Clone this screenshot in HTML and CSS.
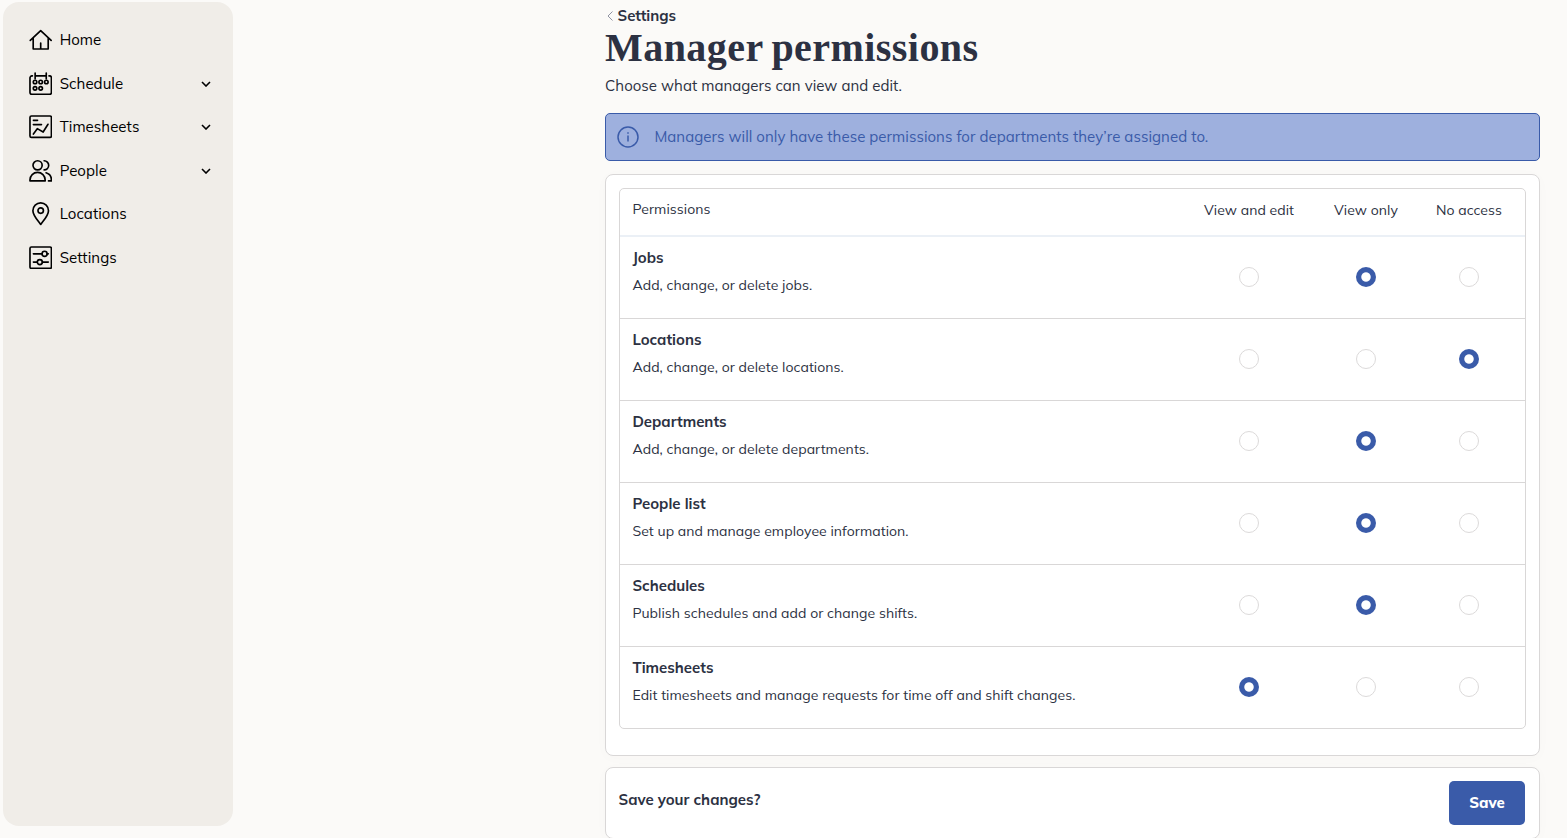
FILE: index.html
```html
<!DOCTYPE html>
<html lang="en">
<head>
    <meta charset="UTF-8">
    <title>Manager permissions</title>
    <link rel="stylesheet" href="styles.css">
</head>
<body>
    <!-- Sidebar menu -->
    <nav class="sidebar">
        <ul>
            <li><a href="#">
                <svg class="icon" viewBox="0 0 24 24"><path d="M1.3 12.7 12 2.6l10.7 10.1M4.3 10.5V21.5h15.4V10.5M12 21v-5.5"/></svg>
                <span>Home</span>
            </a></li>
            <li><a href="#">
                <svg class="icon" viewBox="0 0 24 24"><path d="M3.5 4H3a2 2 0 0 0-2 2v15a2 2 0 0 0 2 2h18a2 2 0 0 0 2-2V6a2 2 0 0 0-2-2h-.5M6.3 1v6M17.7 1v6M6.3 4h11.4"/><circle cx="6.2" cy="10.3" r="1.8"/><circle cx="12" cy="10.3" r="1.8"/><circle cx="17.8" cy="10.3" r="1.8"/><circle cx="6.2" cy="16.8" r="1.8"/><circle cx="12" cy="16.8" r="1.8"/></svg>
                <span>Schedule</span>
                <svg class="chevron" viewBox="0 0 10 6"><path d="M1 1l4 4 4-4"/></svg>
            </a></li>
            <li><a href="#">
                <svg class="icon" viewBox="0 0 24 24"><rect x="1" y="1" width="22" height="22" rx="1.5"/><path d="M4.5 5.5h4.3M4.5 9.8h8.3M4.5 19.5l4-5.5 6 3.5 5-8"/></svg>
                <span>Timesheets</span>
                <svg class="chevron" viewBox="0 0 10 6"><path d="M1 1l4 4 4-4"/></svg>
            </a></li>
            <li><a href="#">
                <svg class="icon" viewBox="0 0 24 24"><circle cx="8.8" cy="6.5" r="4.7"/><path d="M1 22.5v-1a7.7 7.7 0 0 1 15.6 0v1zM15.5 1.8a4.7 4.7 0 0 1 0 9.4M17.5 14.1a7.7 7.7 0 0 1 5.5 7.4v1h-3"/></svg>
                <span>People</span>
                <svg class="chevron" viewBox="0 0 10 6"><path d="M1 1l4 4 4-4"/></svg>
            </a></li>
            <li><a href="#">
                <svg class="icon" viewBox="0 0 24 24"><path d="M12 23C9.5 19.5 4 13.8 4 8.9a8 8 0 0 1 16 0C20 13.8 14.5 19.5 12 23z"/><circle cx="12" cy="8.8" r="2.8"/></svg>
                <span>Locations</span>
            </a></li>
            <li><a href="#">
                <svg class="icon" viewBox="0 0 24 24"><rect x="1" y="1" width="22" height="22" rx="1.5"/><path d="M4.5 8h8.9M18.6 8h1.2M4.5 16.5h4M13.7 16.5h6.1"/><circle cx="16" cy="8" r="2.6"/><circle cx="11.1" cy="16.5" r="2.6"/></svg>
                <span>Settings</span>
            </a></li>
        </ul>
    </nav>

    <main class="content">
        <a href="#" class="back">
            <svg viewBox="0 0 6 10"><path d="M5.5 .5 1 5l4.5 4.5"/></svg>
            <span>Settings</span>
        </a>
        <h1>Manager permissions</h1>
        <p class="intro">Choose what managers can view and edit.</p>

        <div class="notice">
            <svg viewBox="0 0 22 22"><circle cx="11" cy="11" r="10"/><path d="M11 9.5v6M11 6.3v1.5"/></svg>
            <span>Managers will only have these permissions for departments they’re assigned to.</span>
        </div>

        <form>
            <div class="card permissions">
                <div class="table">
                    <div class="row header">
                        <div class="title">Permissions</div>
                        <div>View and edit</div>
                        <div>View only</div>
                        <div>No access</div>
                    </div>
                    <div class="row">
                        <div class="info"><h2>Jobs</h2><p>Add, change, or delete jobs.</p></div>
                        <input type="radio" name="jobs">
                        <input type="radio" name="jobs" checked>
                        <input type="radio" name="jobs">
                    </div>
                    <div class="row">
                        <div class="info"><h2>Locations</h2><p>Add, change, or delete locations.</p></div>
                        <input type="radio" name="locations">
                        <input type="radio" name="locations">
                        <input type="radio" name="locations" checked>
                    </div>
                    <div class="row">
                        <div class="info"><h2>Departments</h2><p>Add, change, or delete departments.</p></div>
                        <input type="radio" name="departments">
                        <input type="radio" name="departments" checked>
                        <input type="radio" name="departments">
                    </div>
                    <div class="row">
                        <div class="info"><h2>People list</h2><p>Set up and manage employee information.</p></div>
                        <input type="radio" name="people">
                        <input type="radio" name="people" checked>
                        <input type="radio" name="people">
                    </div>
                    <div class="row">
                        <div class="info"><h2>Schedules</h2><p>Publish schedules and add or change shifts.</p></div>
                        <input type="radio" name="schedules">
                        <input type="radio" name="schedules" checked>
                        <input type="radio" name="schedules">
                    </div>
                    <div class="row">
                        <div class="info"><h2>Timesheets</h2><p>Edit timesheets and manage requests for time off and shift changes.</p></div>
                        <input type="radio" name="timesheets" checked>
                        <input type="radio" name="timesheets">
                        <input type="radio" name="timesheets">
                    </div>
                </div>
            </div>

            <div class="card save">
                <span>Save your changes?</span>
                <button type="button">Save</button>
            </div>
        </form>
    </main>
</body>
</html>
```
FILE: styles.css
```css
* {
    box-sizing: border-box;
}
body {
    margin: 0;
    height: 838px;
    overflow: hidden;
    display: flex;
    background-color: #fbfaf8;
    color: #2c3142;
    font-family: Mulish, Lato, sans-serif;
    font-size: 15px;
    line-height: 20px;
}
h1, h2, p, ul {
    margin: 0;
    padding: 0;
}
a {
    color: inherit;
    text-decoration: none;
}
svg {
    fill: none;
    stroke: currentColor;
    flex-shrink: 0;
}
/* Sidebar */
.sidebar {
    width: 230px;
    height: 824px;
    margin: 2px 0 0 3px;
    padding: 16.4px 22.5px 0 25.6px;
    border-radius: 16px;
    background-color: #f0ede8;
    color: #000;
    flex-shrink: 0;
}
.sidebar ul {
    list-style: none;
}
.sidebar a {
    display: flex;
    align-items: center;
    height: 43.5px;
    letter-spacing: 0.05px;
}
.icon {
    width: 23.4px;
    height: 23.4px;
    margin-right: 7.7px;
    stroke-width: 1.7;
    stroke-linecap: round;
    stroke-linejoin: round;
}
.chevron {
    width: 10px;
    height: 6px;
    margin-left: auto;
    stroke-width: 1.6;
}
/* Page content */
.content {
    width: 935px;
    margin-left: 372px;
    padding-top: 6px;
    flex-shrink: 0;
}
.back {
    display: flex;
    align-items: center;
    padding-left: 2px;
    font-weight: bold;
}
.back svg {
    width: 6px;
    height: 10px;
    margin-right: 4.5px;
    stroke: #9093a2;
}
h1 {
    font-family: "Liberation Serif", serif;
    font-size: 40px;
    line-height: 44px;
    letter-spacing: 0.45px;
    word-spacing: -2px;
    white-space: nowrap;
}
.intro {
    margin-top: 6px;
    letter-spacing: 0.04px;
}
.notice {
    display: flex;
    align-items: center;
    height: 48px;
    margin-top: 17px;
    padding-left: 11px;
    border: 1px solid #3a5ba9;
    border-radius: 5px;
    background-color: #9eb0de;
    color: #3a5ba9;
    letter-spacing: 0.05px;
}
.notice svg {
    width: 22px;
    height: 22px;
    margin-right: 15.4px;
    stroke-width: 1.5;
}
.card {
    border: 1px solid #d9d7d7;
    border-radius: 8px;
    background-color: #fff;
    box-shadow: 0 2px 14px rgba(80, 60, 30, 0.02);
}
.permissions {
    height: 582px;
    margin-top: 13px;
    padding: 13px;
}
/* Permissions table */
.table {
    border: 1px solid #d9d7d7;
    border-radius: 5px;
}
.row {
    display: grid;
    grid-template-columns: 1fr 140px 94px 112px;
    align-items: center;
    justify-items: center;
    height: 82px;
    padding-bottom: 1px;
    border-bottom: 1px solid #d9d7d7;
}
.row:last-child {
    height: 81px;
    border-bottom: none;
}
.header {
    height: 48px;
    padding-bottom: 4px;
    border-bottom: 2px solid #ebf0f6;
    font-size: 14px;
    letter-spacing: 0.06px;
}
.title, .info {
    justify-self: start;
    padding-left: 12.4px;
}
.title {
    margin-top: -2px;
}
.info {
    align-self: start;
    padding-top: 11px;
}
h2 {
    font-size: 15px;
    line-height: 20px;
}
.info p {
    margin-top: 7px;
    font-size: 14px;
    letter-spacing: 0.06px;
}
input {
    appearance: none;
    width: 20px;
    height: 20px;
    margin: 0;
    border: 1px solid #dcdada;
    border-radius: 50%;
    background-color: #fff;
}
input:checked {
    border: none;
    background: radial-gradient(circle, #fff 4.2px, #3a5ba9 5.2px);
}
/* Save bar */
.save {
    display: flex;
    justify-content: space-between;
    align-items: flex-start;
    height: 72px;
    margin-top: 11px;
    padding: 13px 14px 13px 12.5px;
    font-weight: bold;
}
.save span {
    margin-top: 9px;
}
button {
    width: 76px;
    height: 44px;
    padding: 0 0 2px;
    border: none;
    border-radius: 5px;
    background-color: #3a5ba9;
    color: #fff;
    font-family: inherit;
    font-size: 15px;
    font-weight: 800;
}
```
